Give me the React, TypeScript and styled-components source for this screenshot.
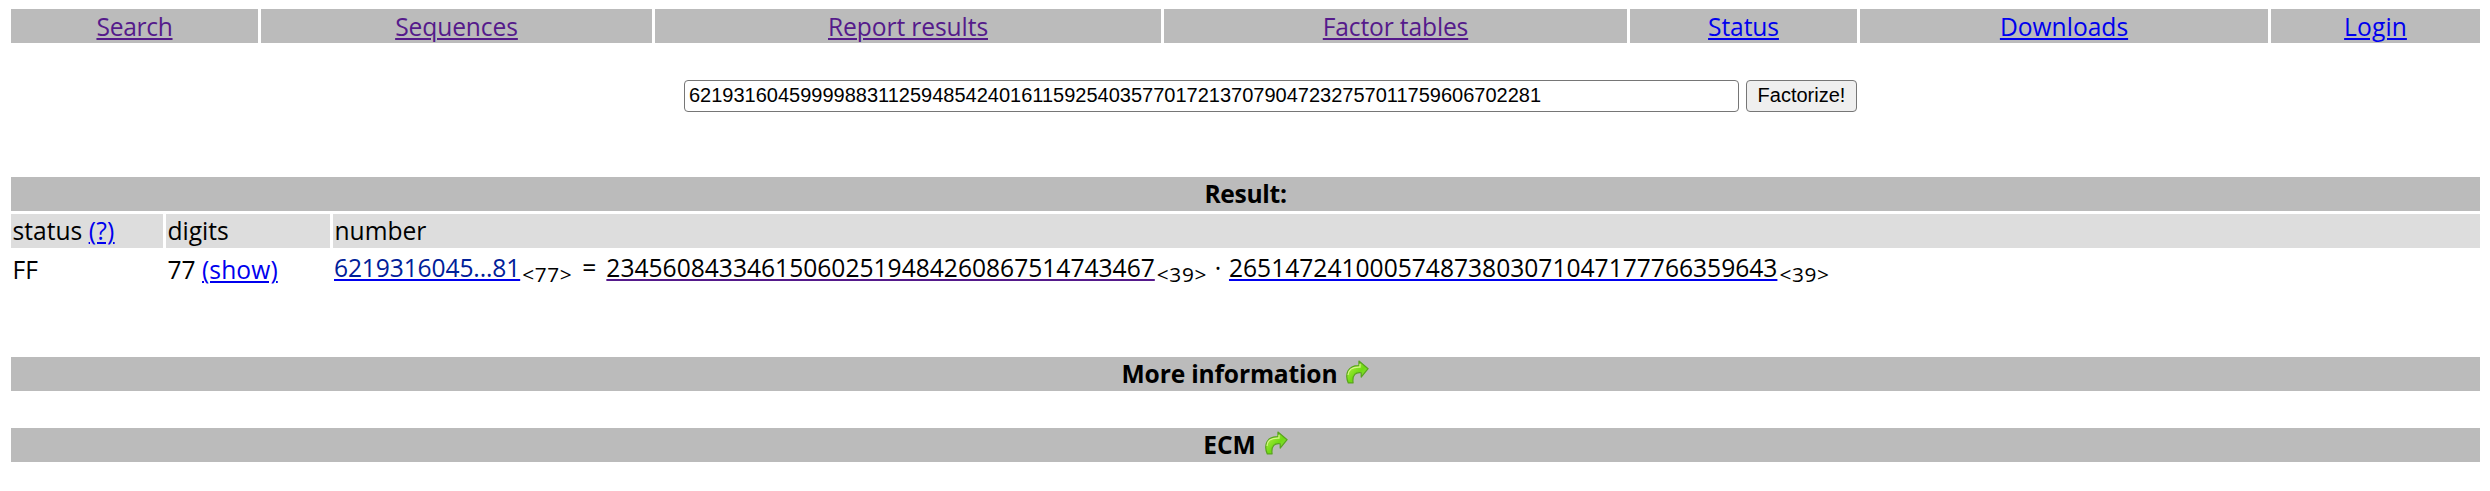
import React from "react";
import styled, { createGlobalStyle } from "styled-components";

const Global = createGlobalStyle`
  * { box-sizing: border-box; }
  body { margin: 0; background: #fff; color: #000; font: 24.6px/34px "Open Sans", "Noto Sans", sans-serif; }
`;
const Page = styled.main`
  height: 491px;
  padding: 9px 10px 0 11px;
  overflow: hidden;
`;
const Nav = styled.nav`
  display: grid;
  grid-template-columns: 247px 391px 506px 463px 227px 408px 209px;
  gap: 3px;
`;
const NavCell = styled.div`
  height: 34px;
  padding-top: 1px;
  background: #bbb;
  line-height: 33px;
  text-align: center;
`;
const Link = styled.a<{ $visited?: boolean; $spacing?: number }>`
  color: ${(p) => (p.$visited ? "#551a8b" : "#0000ee")};
  letter-spacing: ${(p) => p.$spacing ?? 0}px;
  text-decoration: underline;
  text-decoration-thickness: 2px;
  text-underline-offset: 2px;
  text-decoration-skip-ink: auto;
`;
const Form = styled.form`
  display: flex;
  gap: 7px;
  margin: 37px 0 0 673px;
`;
const NumberInput = styled.input`
  width: 1055px;
  height: 32px;
  padding: 0 4px 2px;
  border: 1px solid #767676;
  border-radius: 4px;
  font: 20px "Liberation Sans", Arial, sans-serif;
`;
const Submit = styled.button`
  width: 111px;
  height: 32px;
  padding: 0 0 2px;
  border: 1px solid #767676;
  border-radius: 4px;
  background: #efefef;
  color: #000;
  font: 20px "Liberation Sans", Arial, sans-serif;
`;
const Bar = styled.h2<{ $top: number; $spacing?: number }>`
  display: flex;
  justify-content: center;
  height: 34px;
  margin: ${(p) => p.$top}px 0 0;
  background: #bbb;
  font-size: 24.6px;
  font-weight: 700;
  letter-spacing: ${(p) => p.$spacing ?? 0}px;
`;
const ResultRow = styled.div`
  display: grid;
  grid-template-columns: 152px 164px 1fr;
  gap: 3px;
  margin-top: 3px;
`;
const HeadCell = styled.div`
  height: 34px;
  padding-left: 1.5px;
  background: #ddd;
`;
const Cell = styled.div`
  height: 42px;
  padding: 2px 0 0 1.5px;
  white-space: nowrap;
`;
const NumberCell = styled(Cell)`
  display: flex;
  padding: 0 0 0 1px;
`;
const Digits = styled.span<{ $color: string }>`
  color: ${(p) => p.$color};
`;
const Count = styled.span`
  padding: 6px 0 0 2px;
  font-size: 20.8px;
  letter-spacing: 0.65px;
`;
const Operator = styled.span<{ $width: number }>`
  width: ${(p) => p.$width}px;
  text-align: center;
`;
const Icon = styled.svg`
  width: 24px;
  height: 24px;
  margin: 3px 0 0 8px;
`;

const Arrow = () => (
  <Icon viewBox="0 0 16 16">
    <defs>
      <linearGradient id="leaf" x1="0" y1="0" x2="1" y2="1">
        <stop offset="0" stopColor="#c5ee55" />
        <stop offset="0.55" stopColor="#6fdb12" />
        <stop offset="1" stopColor="#a5dd70" />
      </linearGradient>
    </defs>
    <path
      d="M9.3.7 15.4 5.8 10.8 11.4V8.5C7.4 7.9 4.6 9.6 5.4 15.3H2.2C-.4 9.4 2 3.5 9.3 3.7Z"
      fill="url(#leaf)"
      stroke="#58a51c"
      strokeWidth=".8"
      strokeLinejoin="round"
    />
    <path d="M2 10C2.2 6.2 5 4.5 10 4.7V2.6" fill="none" stroke="#d6f58a" strokeWidth=".8" />
  </Icon>
);

const navItems = [
  { label: "Search", visited: true, spacing: -0.3 },
  { label: "Sequences", visited: true, spacing: -0.1 },
  { label: "Report results", visited: true, spacing: -0.1 },
  { label: "Factor tables", visited: true, spacing: -0.15 },
  { label: "Status", visited: false, spacing: -0.1 },
  { label: "Downloads", visited: false, spacing: 0 },
  { label: "Login", visited: false, spacing: 0.1 },
];

export default function App() {
  return (
    <Page>
      <Global />
      <Nav>
        {navItems.map((n) => (
          <NavCell key={n.label}>
            <Link $visited={n.visited} $spacing={n.spacing}>{n.label}</Link>
          </NavCell>
        ))}
      </Nav>
      <Form>
        <NumberInput defaultValue="62193160459999883112594854240161159254035770172137079047232757011759606702281" />
        <Submit type="button">Factorize!</Submit>
      </Form>
      <Bar $top={65} $spacing={-0.3}>Result:</Bar>
      <ResultRow>
        <HeadCell>status <Link $spacing={0.3}>(?)</Link></HeadCell>
        <HeadCell>digits</HeadCell>
        <HeadCell>number</HeadCell>
      </ResultRow>
      <ResultRow>
        <Cell>FF</Cell>
        <Cell>77 <Link $spacing={0.1}>(show)</Link></Cell>
        <NumberCell>
          <Link $spacing={-0.13}><Digits $color="#002099">6219316045...81</Digits></Link>
          <Count>&lt;77&gt;</Count>
          <Operator $width={34}>=</Operator>
          <Link $visited><Digits $color="#000">234560843346150602519484260867514743467</Digits></Link>
          <Count>&lt;39&gt;</Count>
          <Operator $width={22}>·</Operator>
          <Link><Digits $color="#000">265147241000574873803071047177766359643</Digits></Link>
          <Count>&lt;39&gt;</Count>
        </NumberCell>
      </ResultRow>
      <Bar $top={64} $spacing={-0.18}>More information<Arrow /></Bar>
      <Bar $top={37}>ECM<Arrow /></Bar>
    </Page>
  );
}
